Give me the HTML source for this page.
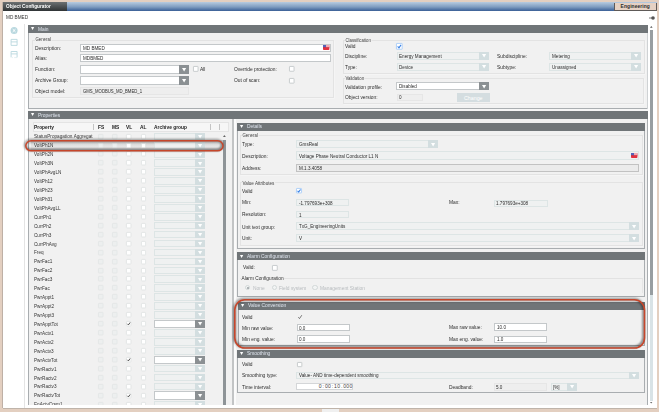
<!DOCTYPE html>
<html><head><meta charset="utf-8"><title>Object Configurator</title>
<style>
html,body{margin:0;padding:0}
body{width:659px;height:412px;position:relative;overflow:hidden;background:#e3cfc0;font-family:"Liberation Sans",sans-serif}
.a{position:absolute;box-sizing:border-box}
.t{font-size:5.3px;line-height:6px;white-space:nowrap;color:#2c2c2c}
svg.a{overflow:visible}
</style></head><body>
<div class="a " style="left:3px;top:2px;width:654px;height:406px;background:#fff;box-shadow:-0.5px 0 0 #9a928c, 0 0.6px 0 #a8a29c"></div>
<div class="a " style="left:3px;top:2px;width:64px;height:9px;background:linear-gradient(#6b7072,#2f3335)"></div>
<div class="a " style="left:67px;top:2px;width:590px;height:9px;background:linear-gradient(#b7cbe0,#7e9cc0 55%,#3a5f96)"></div>
<div class="a t" style="left:6.3px;top:4.1px;transform:scaleX(0.97);transform-origin:0 0;color:#fff;font-weight:bold;font-size:4.9px">Object Configurator</div>
<div class="a " style="left:614px;top:2.5px;width:42.5px;height:8.0px;background:#e5d1c3;border:1px solid #5e5a58;border-top:none"></div>
<div class="a t" style="left:620.6px;top:3.6px;color:#2a2a2a;font-weight:bold;font-size:4.9px;letter-spacing:0.1px">Engineering</div>
<div class="a t" style="left:5.8px;top:13.8px;transform:scaleX(0.9);transform-origin:0 0;font-size:5.2px;color:#333">MD BMED</div>
<svg class="a" style="left:648px;top:15px" width="8" height="6" viewBox="0 0 8 6"><circle cx="5" cy="3" r="1.8" fill="#555"/><rect x="1" y="2.6" width="3" height="0.8" fill="#555"/></svg>
<svg class="a" style="left:9px;top:25px" width="10" height="34" viewBox="0 0 10 34"><circle cx="5.1" cy="5.5" r="3.5" fill="#b9d8df"/><path d="M3.7 4.1 L6.5 6.9 M6.5 4.1 L3.7 6.9" stroke="#fff" stroke-width="1"/><path d="M2.1 14.4 H8.1 V20.4 H2.1 Z M2.1 16.9 H8.1" fill="none" stroke="#b9d8df" stroke-width="0.9"/><path d="M2.1 32.4 V26.5 H8.1 V32.4 M2.1 28.9 H8.1" fill="none" stroke="#b9d8df" stroke-width="0.9"/><path d="M3.2 32.6 H4 M5.2 32.6 H8" stroke="#d0e4e8" stroke-width="0.6"/></svg>
<div class="a " style="left:24px;top:24px;width:1px;height:384px;background:#e4e4e4"></div>
<div class="a " style="left:28px;top:25px;width:620px;height:83.6px;background:#f1f1f1;box-shadow:inset 1px 0 0 #a9adb0,inset -1px 0 0 #cfd2d4,inset 0 -1px 0 #a9adb0"></div>
<div class="a " style="left:28px;top:25px;width:620px;height:8px;background:#707578"></div>
<svg class="a" style="left:31.0px;top:27.4px" width="3.2" height="3" viewBox="0 0 3.2 3"><polygon points="0,0 3.2,0 1.6,3" fill="#fff"/></svg>
<div class="a t" style="left:37.5px;top:25.6px;transform:scaleX(0.92);transform-origin:0 0;color:#dfe5ee">Main</div>
<div class="a " style="left:32.3px;top:40px;width:302.0px;height:58.2px;border:1px solid #e3e3e3;box-shadow:0.5px 0.5px 0 #f9f9f9"></div>
<div class="a t" style="left:35.3px;top:37.2px;transform:scaleX(0.92);transform-origin:0 0;background:#f1f1f1;padding:0 0.5px;color:#3e3e3e;font-size:4.7px">General</div>
<div class="a t" style="left:34.5px;top:44.9px;transform:scaleX(0.93);transform-origin:0 0;">Description:</div>
<div class="a t" style="left:34.5px;top:55.2px;transform:scaleX(0.93);transform-origin:0 0;">Alias:</div>
<div class="a t" style="left:34.5px;top:66.3px;transform:scaleX(0.93);transform-origin:0 0;">Function:</div>
<div class="a t" style="left:34.5px;top:77.4px;transform:scaleX(0.93);transform-origin:0 0;">Archive Group:</div>
<div class="a t" style="left:34.5px;top:88.2px;transform:scaleX(0.93);transform-origin:0 0;">Object model:</div>
<div class="a " style="left:80px;top:44px;width:251px;height:8px;background:#fff;border:1px solid #c4c8ca"></div>
<div class="a t" style="left:82.5px;top:45.0px;transform:scaleX(0.92);transform-origin:0 0;font-size:5px;">MD BMED</div>
<svg class="a" style="left:322.5px;top:45.0px" width="6.4" height="5" viewBox="0 0 7 5.5" preserveAspectRatio="none"><rect width="7" height="5.5" rx="0.9" fill="#e3303f"/><rect x="3.1" y="0" width="3.9" height="2.6" fill="#f2a9b2"/><rect x="0" y="0" width="3.3" height="2.6" fill="#5563b8"/><rect x="0" y="2.6" width="7" height="0.5" fill="#c8283a"/></svg>
<div class="a " style="left:80px;top:54.2px;width:251px;height:8.1px;background:#fff;border:1px solid #c4c8ca"></div>
<div class="a t" style="left:82.5px;top:55.25px;transform:scaleX(0.92);transform-origin:0 0;font-size:5px;">MDBMED</div>
<div class="a " style="left:80px;top:65.1px;width:109px;height:8.7px;background:#fff;border:1px solid #c4c8ca"></div>
<div class="a " style="left:179px;top:65.1px;width:10px;height:8.7px;background:#8b9093"></div>
<svg class="a" style="left:181.9px;top:67.8px" width="4.2" height="3.5" viewBox="0 0 4.2 3.5"><polygon points="0,0 4.2,0 2.1,3.5" fill="#fff"/></svg>
<div class="a " style="left:80px;top:76.2px;width:109px;height:8.6px;background:#fff;border:1px solid #c4c8ca"></div>
<div class="a " style="left:179px;top:76.2px;width:10px;height:8.6px;background:#8b9093"></div>
<svg class="a" style="left:181.9px;top:78.85px" width="4.2" height="3.5" viewBox="0 0 4.2 3.5"><polygon points="0,0 4.2,0 2.1,3.5" fill="#fff"/></svg>
<div class="a " style="left:80px;top:87.3px;width:108.5px;height:7.7px;background:#eeeeee;border:1px solid #e6e6e6"></div>
<div class="a t" style="left:82.5px;top:88.15px;transform:scaleX(0.85);transform-origin:0 0;font-size:5px;">GMS_MODBUS_MD_BMED_1</div>
<svg class="a" style="left:193.2px;top:66.2px" width="5.5" height="5.8" viewBox="0 0 5.5 5.8"><rect x="0.45" y="0.45" width="4.6" height="4.9" rx="0.3" fill="#fff" stroke="#c4c8ca" stroke-width="0.9"/></svg>
<div class="a t" style="left:200px;top:66.1px;transform:scaleX(0.92);transform-origin:0 0;">All</div>
<div class="a t" style="left:234px;top:66.2px;transform:scaleX(0.92);transform-origin:0 0;">Override protection:</div>
<svg class="a" style="left:289.3px;top:66.3px" width="5.5" height="5.7" viewBox="0 0 5.5 5.7"><rect x="0.45" y="0.45" width="4.6" height="4.8" rx="0.3" fill="#fff" stroke="#c4c8ca" stroke-width="0.9"/></svg>
<div class="a t" style="left:234px;top:77.2px;transform:scaleX(0.92);transform-origin:0 0;">Out of scan:</div>
<svg class="a" style="left:289.3px;top:77.6px" width="5.5" height="5.6" viewBox="0 0 5.5 5.6"><rect x="0.45" y="0.45" width="4.6" height="4.7" rx="0.3" fill="#fff" stroke="#c4c8ca" stroke-width="0.9"/></svg>
<div class="a " style="left:342.5px;top:40px;width:302.0px;height:34px;border:1px solid #e3e3e3;box-shadow:0.5px 0.5px 0 #f9f9f9"></div>
<div class="a t" style="left:345.3px;top:38.1px;transform:scaleX(0.92);transform-origin:0 0;background:#f1f1f1;padding:0 0.5px;color:#3e3e3e;font-size:4.7px">Classification</div>
<div class="a t" style="left:344.5px;top:43.2px;transform:scaleX(0.92);transform-origin:0 0;">Valid</div>
<svg class="a" style="left:396.2px;top:43.2px" width="6.6" height="6.7" viewBox="0 0 6.6 6.7"><rect x="0.45" y="0.45" width="5.7" height="5.8" rx="0.3" fill="#fff" stroke="#a9cdf7" stroke-width="0.9"/><path d="M1.65 3.4840000000000004 L2.9699999999999998 4.824 L5.016 1.8760000000000003" fill="none" stroke="#3a82e6" stroke-width="1.1"/></svg>
<div class="a t" style="left:344.5px;top:53.2px;transform:scaleX(0.92);transform-origin:0 0;">Discipline:</div>
<div class="a " style="left:396.8px;top:52.1px;width:92.2px;height:7.9px;background:#eff1f1;border:1px solid #dde5e5"></div>
<div class="a " style="left:479px;top:52.1px;width:10px;height:7.9px;background:#d3dee0"></div>
<svg class="a" style="left:481.9px;top:54.4px" width="4.2" height="3.5" viewBox="0 0 4.2 3.5"><polygon points="0,0 4.2,0 2.1,3.5" fill="#fff"/></svg>
<div class="a t" style="left:399.3px;top:53.05px;transform:scaleX(0.92);transform-origin:0 0;font-size:5px;">Energy Management</div>
<div class="a t" style="left:344.5px;top:64.3px;transform:scaleX(0.92);transform-origin:0 0;">Type:</div>
<div class="a " style="left:396.8px;top:63.1px;width:92.2px;height:7.8px;background:#eff1f1;border:1px solid #dde5e5"></div>
<div class="a " style="left:479px;top:63.1px;width:10px;height:7.8px;background:#d3dee0"></div>
<svg class="a" style="left:481.9px;top:65.35px" width="4.2" height="3.5" viewBox="0 0 4.2 3.5"><polygon points="0,0 4.2,0 2.1,3.5" fill="#fff"/></svg>
<div class="a t" style="left:399.3px;top:64.0px;transform:scaleX(0.92);transform-origin:0 0;font-size:5px;">Device</div>
<div class="a t" style="left:496.5px;top:53.2px;transform:scaleX(0.92);transform-origin:0 0;">Subdiscipline:</div>
<div class="a " style="left:549.2px;top:52px;width:91.8px;height:7.9px;background:#eff1f1;border:1px solid #dde5e5"></div>
<div class="a " style="left:631px;top:52px;width:10px;height:7.9px;background:#d3dee0"></div>
<svg class="a" style="left:633.9px;top:54.3px" width="4.2" height="3.5" viewBox="0 0 4.2 3.5"><polygon points="0,0 4.2,0 2.1,3.5" fill="#fff"/></svg>
<div class="a t" style="left:551.7px;top:52.95px;transform:scaleX(0.92);transform-origin:0 0;font-size:5px;">Metering</div>
<div class="a t" style="left:496.5px;top:64.2px;transform:scaleX(0.92);transform-origin:0 0;">Subtype:</div>
<div class="a " style="left:549.2px;top:63px;width:91.8px;height:7.8px;background:#eff1f1;border:1px solid #dde5e5"></div>
<div class="a " style="left:631px;top:63px;width:10px;height:7.8px;background:#d3dee0"></div>
<svg class="a" style="left:633.9px;top:65.25px" width="4.2" height="3.5" viewBox="0 0 4.2 3.5"><polygon points="0,0 4.2,0 2.1,3.5" fill="#fff"/></svg>
<div class="a t" style="left:551.7px;top:63.9px;transform:scaleX(0.92);transform-origin:0 0;font-size:5px;">Unassigned</div>
<div class="a " style="left:342.7px;top:78.3px;width:301.8px;height:25.9px;border:1px solid #e3e3e3;box-shadow:0.5px 0.5px 0 #f9f9f9"></div>
<div class="a t" style="left:345.3px;top:76.4px;transform:scaleX(0.92);transform-origin:0 0;background:#f1f1f1;padding:0 0.5px;color:#3e3e3e;font-size:4.7px">Validation</div>
<div class="a t" style="left:344.5px;top:83.6px;transform:scaleX(0.92);transform-origin:0 0;">Validation profile:</div>
<div class="a " style="left:396px;top:82.2px;width:93px;height:8.3px;background:#fff;border:1px solid #c4c8ca"></div>
<div class="a " style="left:479px;top:82.2px;width:10px;height:8.3px;background:#8b9093"></div>
<svg class="a" style="left:481.9px;top:84.7px" width="4.2" height="3.5" viewBox="0 0 4.2 3.5"><polygon points="0,0 4.2,0 2.1,3.5" fill="#fff"/></svg>
<div class="a t" style="left:398.5px;top:83.35px;transform:scaleX(0.92);transform-origin:0 0;font-size:5px;">Disabled</div>
<div class="a t" style="left:344.5px;top:94.3px;transform:scaleX(0.92);transform-origin:0 0;">Object version:</div>
<div class="a " style="left:396.8px;top:93.5px;width:25.8px;height:7.9px;background:#eeeeee;border:1px solid #e6e6e6"></div>
<div class="a t" style="left:399.3px;top:94.45px;transform:scaleX(0.92);transform-origin:0 0;font-size:5px;">0</div>
<div class="a " style="left:456.5px;top:93.1px;width:33.5px;height:8.7px;background:#d4dde0"></div>
<div class="a t" style="left:456.5px;top:94.5px;width:33.5px;text-align:center;color:#fff">Change</div>
<div class="a " style="left:28px;top:108.6px;width:620px;height:2.4px;background:#f6f6f6"></div>
<div class="a " style="left:28px;top:111px;width:620px;height:293.6px;background:#f1f1f1;box-shadow:inset 1px 0 0 #a9adb0,inset -1px 0 0 #a9adb0"></div>
<div class="a " style="left:28px;top:111px;width:620px;height:8px;background:#707578"></div>
<svg class="a" style="left:31.0px;top:113.4px" width="3.2" height="3" viewBox="0 0 3.2 3"><polygon points="0,0 3.2,0 1.6,3" fill="#fff"/></svg>
<div class="a t" style="left:37.5px;top:111.6px;transform:scaleX(0.92);transform-origin:0 0;color:#dfe5ee">Properties</div>
<div class="a " style="left:32.8px;top:122.4px;width:195.8px;height:9.6px;background:#f6f6f6;border:1px solid #e4e4e4"></div>
<div class="a t" style="left:34.2px;top:124.1px;transform:scaleX(0.92);transform-origin:0 0;font-weight:bold;color:#222">Property</div>
<div class="a " style="left:93.4px;top:124.3px;width:0.8px;height:6.2px;background:#c4c4c4"></div>
<div class="a " style="left:210.4px;top:124.3px;width:0.8px;height:6.2px;background:#c4c4c4"></div>
<div class="a " style="left:219.2px;top:124.3px;width:0.8px;height:6.2px;background:#c4c4c4"></div>
<div class="a t" style="left:97.8px;top:124.1px;transform:scaleX(0.92);transform-origin:0 0;font-weight:bold;color:#222">FS</div>
<div class="a t" style="left:111.8px;top:124.1px;transform:scaleX(0.92);transform-origin:0 0;font-weight:bold;color:#222">MS</div>
<div class="a t" style="left:125.8px;top:124.1px;transform:scaleX(0.92);transform-origin:0 0;font-weight:bold;color:#222">VL</div>
<div class="a t" style="left:140px;top:124.1px;transform:scaleX(0.92);transform-origin:0 0;font-weight:bold;color:#222">AL</div>
<div class="a t" style="left:153.8px;top:124.1px;transform:scaleX(0.92);transform-origin:0 0;font-weight:bold;color:#222">Archive group</div>
<div class="a" style="left:28px;top:131.5px;width:200px;height:273.3px;overflow:hidden">
<div class="a t" style="left:6.2px;top:1.9px;transform:scaleX(0.88);transform-origin:0 0;color:#353535;width:67px;overflow:hidden">StatusPropagation.Aggregat</div>
<svg class="a" style="left:70.2px;top:2.100000000000006px" width="5.5" height="5.4" viewBox="0 0 5.5 5.4"><rect x="0.45" y="0.45" width="4.6" height="4.5" rx="0.3" fill="#edefef" stroke="#e3e6e6" stroke-width="0.9"/></svg>
<svg class="a" style="left:84.0px;top:2.100000000000006px" width="5.5" height="5.4" viewBox="0 0 5.5 5.4"><rect x="0.45" y="0.45" width="4.6" height="4.5" rx="0.3" fill="#edefef" stroke="#e3e6e6" stroke-width="0.9"/></svg>
<svg class="a" style="left:98.0px;top:2.100000000000006px" width="5.4" height="5.4" viewBox="0 0 5.4 5.4"><rect x="0.45" y="0.45" width="4.5" height="4.5" rx="0.3" fill="#fff" stroke="#e2e5e5" stroke-width="0.9"/></svg>
<svg class="a" style="left:112.5px;top:2.100000000000006px" width="5.0" height="5.4" viewBox="0 0 5.0 5.4"><rect x="0.45" y="0.45" width="4.1" height="4.5" rx="0.3" fill="#fff" stroke="#e2e5e5" stroke-width="0.9"/></svg>
<div class="a " style="left:126.4px;top:1.1000000000000059px;width:50.6px;height:7.6px;background:#eff1f1;border:1px solid #dde5e5"></div>
<div class="a " style="left:167px;top:1.1000000000000059px;width:10px;height:7.6px;background:#d3dee0"></div>
<svg class="a" style="left:169.9px;top:3.25px" width="4.2" height="3.5" viewBox="0 0 4.2 3.5"><polygon points="0,0 4.2,0 2.1,3.5" fill="#fff"/></svg>
<div class="a " style="left:3px;top:8.830000000000013px;width:192px;height:10.0px;background:linear-gradient(#c8c8c8,#dedede 40%,#e6e6e6 70%,#d8d8d8)"></div>
<div class="a t" style="left:6.2px;top:10.83px;transform:scaleX(0.88);transform-origin:0 0;color:#353535;width:67px;overflow:hidden">VoltPh1N</div>
<svg class="a" style="left:70.2px;top:11.030000000000012px" width="5.5" height="5.4" viewBox="0 0 5.5 5.4"><rect x="0.45" y="0.45" width="4.6" height="4.5" rx="0.3" fill="#edefef" stroke="#e3e6e6" stroke-width="0.9"/></svg>
<svg class="a" style="left:84.0px;top:11.030000000000012px" width="5.5" height="5.4" viewBox="0 0 5.5 5.4"><rect x="0.45" y="0.45" width="4.6" height="4.5" rx="0.3" fill="#edefef" stroke="#e3e6e6" stroke-width="0.9"/></svg>
<svg class="a" style="left:98.0px;top:11.030000000000012px" width="5.4" height="5.4" viewBox="0 0 5.4 5.4"><rect x="0.45" y="0.45" width="4.5" height="4.5" rx="0.3" fill="#fff" stroke="#e2e5e5" stroke-width="0.9"/></svg>
<svg class="a" style="left:112.5px;top:11.030000000000012px" width="5.0" height="5.4" viewBox="0 0 5.0 5.4"><rect x="0.45" y="0.45" width="4.1" height="4.5" rx="0.3" fill="#fff" stroke="#e2e5e5" stroke-width="0.9"/></svg>
<div class="a " style="left:126.4px;top:10.030000000000012px;width:50.6px;height:7.6px;background:#eff1f1;border:1px solid #dde5e5"></div>
<div class="a " style="left:167px;top:10.030000000000012px;width:10px;height:7.6px;background:#d3dee0"></div>
<svg class="a" style="left:169.9px;top:12.18px" width="4.2" height="3.5" viewBox="0 0 4.2 3.5"><polygon points="0,0 4.2,0 2.1,3.5" fill="#fff"/></svg>
<div class="a t" style="left:6.2px;top:19.76px;transform:scaleX(0.88);transform-origin:0 0;color:#353535;width:67px;overflow:hidden">VoltPh2N</div>
<svg class="a" style="left:70.2px;top:19.95999999999999px" width="5.5" height="5.4" viewBox="0 0 5.5 5.4"><rect x="0.45" y="0.45" width="4.6" height="4.5" rx="0.3" fill="#edefef" stroke="#e3e6e6" stroke-width="0.9"/></svg>
<svg class="a" style="left:84.0px;top:19.95999999999999px" width="5.5" height="5.4" viewBox="0 0 5.5 5.4"><rect x="0.45" y="0.45" width="4.6" height="4.5" rx="0.3" fill="#edefef" stroke="#e3e6e6" stroke-width="0.9"/></svg>
<svg class="a" style="left:98.0px;top:19.95999999999999px" width="5.4" height="5.4" viewBox="0 0 5.4 5.4"><rect x="0.45" y="0.45" width="4.5" height="4.5" rx="0.3" fill="#fff" stroke="#e2e5e5" stroke-width="0.9"/></svg>
<svg class="a" style="left:112.5px;top:19.95999999999999px" width="5.0" height="5.4" viewBox="0 0 5.0 5.4"><rect x="0.45" y="0.45" width="4.1" height="4.5" rx="0.3" fill="#fff" stroke="#e2e5e5" stroke-width="0.9"/></svg>
<div class="a " style="left:126.4px;top:18.95999999999999px;width:50.6px;height:7.6px;background:#eff1f1;border:1px solid #dde5e5"></div>
<div class="a " style="left:167px;top:18.95999999999999px;width:10px;height:7.6px;background:#d3dee0"></div>
<svg class="a" style="left:169.9px;top:21.11px" width="4.2" height="3.5" viewBox="0 0 4.2 3.5"><polygon points="0,0 4.2,0 2.1,3.5" fill="#fff"/></svg>
<div class="a t" style="left:6.2px;top:28.69px;transform:scaleX(0.88);transform-origin:0 0;color:#353535;width:67px;overflow:hidden">VoltPh3N</div>
<svg class="a" style="left:70.2px;top:28.889999999999997px" width="5.5" height="5.4" viewBox="0 0 5.5 5.4"><rect x="0.45" y="0.45" width="4.6" height="4.5" rx="0.3" fill="#edefef" stroke="#e3e6e6" stroke-width="0.9"/></svg>
<svg class="a" style="left:84.0px;top:28.889999999999997px" width="5.5" height="5.4" viewBox="0 0 5.5 5.4"><rect x="0.45" y="0.45" width="4.6" height="4.5" rx="0.3" fill="#edefef" stroke="#e3e6e6" stroke-width="0.9"/></svg>
<svg class="a" style="left:98.0px;top:28.889999999999997px" width="5.4" height="5.4" viewBox="0 0 5.4 5.4"><rect x="0.45" y="0.45" width="4.5" height="4.5" rx="0.3" fill="#fff" stroke="#e2e5e5" stroke-width="0.9"/></svg>
<svg class="a" style="left:112.5px;top:28.889999999999997px" width="5.0" height="5.4" viewBox="0 0 5.0 5.4"><rect x="0.45" y="0.45" width="4.1" height="4.5" rx="0.3" fill="#fff" stroke="#e2e5e5" stroke-width="0.9"/></svg>
<div class="a " style="left:126.4px;top:27.889999999999997px;width:50.6px;height:7.6px;background:#eff1f1;border:1px solid #dde5e5"></div>
<div class="a " style="left:167px;top:27.889999999999997px;width:10px;height:7.6px;background:#d3dee0"></div>
<svg class="a" style="left:169.9px;top:30.04px" width="4.2" height="3.5" viewBox="0 0 4.2 3.5"><polygon points="0,0 4.2,0 2.1,3.5" fill="#fff"/></svg>
<div class="a t" style="left:6.2px;top:37.62px;transform:scaleX(0.88);transform-origin:0 0;color:#353535;width:67px;overflow:hidden">VoltPhAvgLN</div>
<svg class="a" style="left:70.2px;top:37.82000000000001px" width="5.5" height="5.4" viewBox="0 0 5.5 5.4"><rect x="0.45" y="0.45" width="4.6" height="4.5" rx="0.3" fill="#edefef" stroke="#e3e6e6" stroke-width="0.9"/></svg>
<svg class="a" style="left:84.0px;top:37.82000000000001px" width="5.5" height="5.4" viewBox="0 0 5.5 5.4"><rect x="0.45" y="0.45" width="4.6" height="4.5" rx="0.3" fill="#edefef" stroke="#e3e6e6" stroke-width="0.9"/></svg>
<svg class="a" style="left:98.0px;top:37.82000000000001px" width="5.4" height="5.4" viewBox="0 0 5.4 5.4"><rect x="0.45" y="0.45" width="4.5" height="4.5" rx="0.3" fill="#fff" stroke="#e2e5e5" stroke-width="0.9"/></svg>
<svg class="a" style="left:112.5px;top:37.82000000000001px" width="5.0" height="5.4" viewBox="0 0 5.0 5.4"><rect x="0.45" y="0.45" width="4.1" height="4.5" rx="0.3" fill="#fff" stroke="#e2e5e5" stroke-width="0.9"/></svg>
<div class="a " style="left:126.4px;top:36.82000000000001px;width:50.6px;height:7.6px;background:#eff1f1;border:1px solid #dde5e5"></div>
<div class="a " style="left:167px;top:36.82000000000001px;width:10px;height:7.6px;background:#d3dee0"></div>
<svg class="a" style="left:169.9px;top:38.97px" width="4.2" height="3.5" viewBox="0 0 4.2 3.5"><polygon points="0,0 4.2,0 2.1,3.5" fill="#fff"/></svg>
<div class="a t" style="left:6.2px;top:46.55px;transform:scaleX(0.88);transform-origin:0 0;color:#353535;width:67px;overflow:hidden">VoltPh12</div>
<svg class="a" style="left:70.2px;top:46.750000000000014px" width="5.5" height="5.4" viewBox="0 0 5.5 5.4"><rect x="0.45" y="0.45" width="4.6" height="4.5" rx="0.3" fill="#edefef" stroke="#e3e6e6" stroke-width="0.9"/></svg>
<svg class="a" style="left:84.0px;top:46.750000000000014px" width="5.5" height="5.4" viewBox="0 0 5.5 5.4"><rect x="0.45" y="0.45" width="4.6" height="4.5" rx="0.3" fill="#edefef" stroke="#e3e6e6" stroke-width="0.9"/></svg>
<svg class="a" style="left:98.0px;top:46.750000000000014px" width="5.4" height="5.4" viewBox="0 0 5.4 5.4"><rect x="0.45" y="0.45" width="4.5" height="4.5" rx="0.3" fill="#fff" stroke="#e2e5e5" stroke-width="0.9"/></svg>
<svg class="a" style="left:112.5px;top:46.750000000000014px" width="5.0" height="5.4" viewBox="0 0 5.0 5.4"><rect x="0.45" y="0.45" width="4.1" height="4.5" rx="0.3" fill="#fff" stroke="#e2e5e5" stroke-width="0.9"/></svg>
<div class="a " style="left:126.4px;top:45.750000000000014px;width:50.6px;height:7.6px;background:#eff1f1;border:1px solid #dde5e5"></div>
<div class="a " style="left:167px;top:45.750000000000014px;width:10px;height:7.6px;background:#d3dee0"></div>
<svg class="a" style="left:169.9px;top:47.9px" width="4.2" height="3.5" viewBox="0 0 4.2 3.5"><polygon points="0,0 4.2,0 2.1,3.5" fill="#fff"/></svg>
<div class="a t" style="left:6.2px;top:55.48px;transform:scaleX(0.88);transform-origin:0 0;color:#353535;width:67px;overflow:hidden">VoltPh23</div>
<svg class="a" style="left:70.2px;top:55.68000000000002px" width="5.5" height="5.4" viewBox="0 0 5.5 5.4"><rect x="0.45" y="0.45" width="4.6" height="4.5" rx="0.3" fill="#edefef" stroke="#e3e6e6" stroke-width="0.9"/></svg>
<svg class="a" style="left:84.0px;top:55.68000000000002px" width="5.5" height="5.4" viewBox="0 0 5.5 5.4"><rect x="0.45" y="0.45" width="4.6" height="4.5" rx="0.3" fill="#edefef" stroke="#e3e6e6" stroke-width="0.9"/></svg>
<svg class="a" style="left:98.0px;top:55.68000000000002px" width="5.4" height="5.4" viewBox="0 0 5.4 5.4"><rect x="0.45" y="0.45" width="4.5" height="4.5" rx="0.3" fill="#fff" stroke="#e2e5e5" stroke-width="0.9"/></svg>
<svg class="a" style="left:112.5px;top:55.68000000000002px" width="5.0" height="5.4" viewBox="0 0 5.0 5.4"><rect x="0.45" y="0.45" width="4.1" height="4.5" rx="0.3" fill="#fff" stroke="#e2e5e5" stroke-width="0.9"/></svg>
<div class="a " style="left:126.4px;top:54.68000000000002px;width:50.6px;height:7.6px;background:#eff1f1;border:1px solid #dde5e5"></div>
<div class="a " style="left:167px;top:54.68000000000002px;width:10px;height:7.6px;background:#d3dee0"></div>
<svg class="a" style="left:169.9px;top:56.83px" width="4.2" height="3.5" viewBox="0 0 4.2 3.5"><polygon points="0,0 4.2,0 2.1,3.5" fill="#fff"/></svg>
<div class="a t" style="left:6.2px;top:64.41px;transform:scaleX(0.88);transform-origin:0 0;color:#353535;width:67px;overflow:hidden">VoltPh31</div>
<svg class="a" style="left:70.2px;top:64.61px" width="5.5" height="5.4" viewBox="0 0 5.5 5.4"><rect x="0.45" y="0.45" width="4.6" height="4.5" rx="0.3" fill="#edefef" stroke="#e3e6e6" stroke-width="0.9"/></svg>
<svg class="a" style="left:84.0px;top:64.61px" width="5.5" height="5.4" viewBox="0 0 5.5 5.4"><rect x="0.45" y="0.45" width="4.6" height="4.5" rx="0.3" fill="#edefef" stroke="#e3e6e6" stroke-width="0.9"/></svg>
<svg class="a" style="left:98.0px;top:64.61px" width="5.4" height="5.4" viewBox="0 0 5.4 5.4"><rect x="0.45" y="0.45" width="4.5" height="4.5" rx="0.3" fill="#fff" stroke="#e2e5e5" stroke-width="0.9"/></svg>
<svg class="a" style="left:112.5px;top:64.61px" width="5.0" height="5.4" viewBox="0 0 5.0 5.4"><rect x="0.45" y="0.45" width="4.1" height="4.5" rx="0.3" fill="#fff" stroke="#e2e5e5" stroke-width="0.9"/></svg>
<div class="a " style="left:126.4px;top:63.61px;width:50.6px;height:7.6px;background:#eff1f1;border:1px solid #dde5e5"></div>
<div class="a " style="left:167px;top:63.61px;width:10px;height:7.6px;background:#d3dee0"></div>
<svg class="a" style="left:169.9px;top:65.76px" width="4.2" height="3.5" viewBox="0 0 4.2 3.5"><polygon points="0,0 4.2,0 2.1,3.5" fill="#fff"/></svg>
<div class="a t" style="left:6.2px;top:73.34px;transform:scaleX(0.88);transform-origin:0 0;color:#353535;width:67px;overflow:hidden">VoltPhAvgLL</div>
<svg class="a" style="left:70.2px;top:73.54px" width="5.5" height="5.4" viewBox="0 0 5.5 5.4"><rect x="0.45" y="0.45" width="4.6" height="4.5" rx="0.3" fill="#edefef" stroke="#e3e6e6" stroke-width="0.9"/></svg>
<svg class="a" style="left:84.0px;top:73.54px" width="5.5" height="5.4" viewBox="0 0 5.5 5.4"><rect x="0.45" y="0.45" width="4.6" height="4.5" rx="0.3" fill="#edefef" stroke="#e3e6e6" stroke-width="0.9"/></svg>
<svg class="a" style="left:98.0px;top:73.54px" width="5.4" height="5.4" viewBox="0 0 5.4 5.4"><rect x="0.45" y="0.45" width="4.5" height="4.5" rx="0.3" fill="#fff" stroke="#e2e5e5" stroke-width="0.9"/></svg>
<svg class="a" style="left:112.5px;top:73.54px" width="5.0" height="5.4" viewBox="0 0 5.0 5.4"><rect x="0.45" y="0.45" width="4.1" height="4.5" rx="0.3" fill="#fff" stroke="#e2e5e5" stroke-width="0.9"/></svg>
<div class="a " style="left:126.4px;top:72.54px;width:50.6px;height:7.6px;background:#eff1f1;border:1px solid #dde5e5"></div>
<div class="a " style="left:167px;top:72.54px;width:10px;height:7.6px;background:#d3dee0"></div>
<svg class="a" style="left:169.9px;top:74.69px" width="4.2" height="3.5" viewBox="0 0 4.2 3.5"><polygon points="0,0 4.2,0 2.1,3.5" fill="#fff"/></svg>
<div class="a t" style="left:6.2px;top:82.27px;transform:scaleX(0.88);transform-origin:0 0;color:#353535;width:67px;overflow:hidden">CurrPh1</div>
<svg class="a" style="left:70.2px;top:82.47000000000001px" width="5.5" height="5.4" viewBox="0 0 5.5 5.4"><rect x="0.45" y="0.45" width="4.6" height="4.5" rx="0.3" fill="#edefef" stroke="#e3e6e6" stroke-width="0.9"/></svg>
<svg class="a" style="left:84.0px;top:82.47000000000001px" width="5.5" height="5.4" viewBox="0 0 5.5 5.4"><rect x="0.45" y="0.45" width="4.6" height="4.5" rx="0.3" fill="#edefef" stroke="#e3e6e6" stroke-width="0.9"/></svg>
<svg class="a" style="left:98.0px;top:82.47000000000001px" width="5.4" height="5.4" viewBox="0 0 5.4 5.4"><rect x="0.45" y="0.45" width="4.5" height="4.5" rx="0.3" fill="#fff" stroke="#e2e5e5" stroke-width="0.9"/></svg>
<svg class="a" style="left:112.5px;top:82.47000000000001px" width="5.0" height="5.4" viewBox="0 0 5.0 5.4"><rect x="0.45" y="0.45" width="4.1" height="4.5" rx="0.3" fill="#fff" stroke="#e2e5e5" stroke-width="0.9"/></svg>
<div class="a " style="left:126.4px;top:81.47000000000001px;width:50.6px;height:7.6px;background:#eff1f1;border:1px solid #dde5e5"></div>
<div class="a " style="left:167px;top:81.47000000000001px;width:10px;height:7.6px;background:#d3dee0"></div>
<svg class="a" style="left:169.9px;top:83.62px" width="4.2" height="3.5" viewBox="0 0 4.2 3.5"><polygon points="0,0 4.2,0 2.1,3.5" fill="#fff"/></svg>
<div class="a t" style="left:6.2px;top:91.2px;transform:scaleX(0.88);transform-origin:0 0;color:#353535;width:67px;overflow:hidden">CurrPh2</div>
<svg class="a" style="left:70.2px;top:91.39999999999999px" width="5.5" height="5.4" viewBox="0 0 5.5 5.4"><rect x="0.45" y="0.45" width="4.6" height="4.5" rx="0.3" fill="#edefef" stroke="#e3e6e6" stroke-width="0.9"/></svg>
<svg class="a" style="left:84.0px;top:91.39999999999999px" width="5.5" height="5.4" viewBox="0 0 5.5 5.4"><rect x="0.45" y="0.45" width="4.6" height="4.5" rx="0.3" fill="#edefef" stroke="#e3e6e6" stroke-width="0.9"/></svg>
<svg class="a" style="left:98.0px;top:91.39999999999999px" width="5.4" height="5.4" viewBox="0 0 5.4 5.4"><rect x="0.45" y="0.45" width="4.5" height="4.5" rx="0.3" fill="#fff" stroke="#e2e5e5" stroke-width="0.9"/></svg>
<svg class="a" style="left:112.5px;top:91.39999999999999px" width="5.0" height="5.4" viewBox="0 0 5.0 5.4"><rect x="0.45" y="0.45" width="4.1" height="4.5" rx="0.3" fill="#fff" stroke="#e2e5e5" stroke-width="0.9"/></svg>
<div class="a " style="left:126.4px;top:90.39999999999999px;width:50.6px;height:7.6px;background:#eff1f1;border:1px solid #dde5e5"></div>
<div class="a " style="left:167px;top:90.39999999999999px;width:10px;height:7.6px;background:#d3dee0"></div>
<svg class="a" style="left:169.9px;top:92.55px" width="4.2" height="3.5" viewBox="0 0 4.2 3.5"><polygon points="0,0 4.2,0 2.1,3.5" fill="#fff"/></svg>
<div class="a t" style="left:6.2px;top:100.13px;transform:scaleX(0.88);transform-origin:0 0;color:#353535;width:67px;overflow:hidden">CurrPh3</div>
<svg class="a" style="left:70.2px;top:100.33px" width="5.5" height="5.4" viewBox="0 0 5.5 5.4"><rect x="0.45" y="0.45" width="4.6" height="4.5" rx="0.3" fill="#edefef" stroke="#e3e6e6" stroke-width="0.9"/></svg>
<svg class="a" style="left:84.0px;top:100.33px" width="5.5" height="5.4" viewBox="0 0 5.5 5.4"><rect x="0.45" y="0.45" width="4.6" height="4.5" rx="0.3" fill="#edefef" stroke="#e3e6e6" stroke-width="0.9"/></svg>
<svg class="a" style="left:98.0px;top:100.33px" width="5.4" height="5.4" viewBox="0 0 5.4 5.4"><rect x="0.45" y="0.45" width="4.5" height="4.5" rx="0.3" fill="#fff" stroke="#e2e5e5" stroke-width="0.9"/></svg>
<svg class="a" style="left:112.5px;top:100.33px" width="5.0" height="5.4" viewBox="0 0 5.0 5.4"><rect x="0.45" y="0.45" width="4.1" height="4.5" rx="0.3" fill="#fff" stroke="#e2e5e5" stroke-width="0.9"/></svg>
<div class="a " style="left:126.4px;top:99.33px;width:50.6px;height:7.6px;background:#eff1f1;border:1px solid #dde5e5"></div>
<div class="a " style="left:167px;top:99.33px;width:10px;height:7.6px;background:#d3dee0"></div>
<svg class="a" style="left:169.9px;top:101.48px" width="4.2" height="3.5" viewBox="0 0 4.2 3.5"><polygon points="0,0 4.2,0 2.1,3.5" fill="#fff"/></svg>
<div class="a t" style="left:6.2px;top:109.06px;transform:scaleX(0.88);transform-origin:0 0;color:#353535;width:67px;overflow:hidden">CurrPhAvg</div>
<svg class="a" style="left:70.2px;top:109.26px" width="5.5" height="5.4" viewBox="0 0 5.5 5.4"><rect x="0.45" y="0.45" width="4.6" height="4.5" rx="0.3" fill="#edefef" stroke="#e3e6e6" stroke-width="0.9"/></svg>
<svg class="a" style="left:84.0px;top:109.26px" width="5.5" height="5.4" viewBox="0 0 5.5 5.4"><rect x="0.45" y="0.45" width="4.6" height="4.5" rx="0.3" fill="#edefef" stroke="#e3e6e6" stroke-width="0.9"/></svg>
<svg class="a" style="left:98.0px;top:109.26px" width="5.4" height="5.4" viewBox="0 0 5.4 5.4"><rect x="0.45" y="0.45" width="4.5" height="4.5" rx="0.3" fill="#fff" stroke="#e2e5e5" stroke-width="0.9"/></svg>
<svg class="a" style="left:112.5px;top:109.26px" width="5.0" height="5.4" viewBox="0 0 5.0 5.4"><rect x="0.45" y="0.45" width="4.1" height="4.5" rx="0.3" fill="#fff" stroke="#e2e5e5" stroke-width="0.9"/></svg>
<div class="a " style="left:126.4px;top:108.26px;width:50.6px;height:7.6px;background:#eff1f1;border:1px solid #dde5e5"></div>
<div class="a " style="left:167px;top:108.26px;width:10px;height:7.6px;background:#d3dee0"></div>
<svg class="a" style="left:169.9px;top:110.41px" width="4.2" height="3.5" viewBox="0 0 4.2 3.5"><polygon points="0,0 4.2,0 2.1,3.5" fill="#fff"/></svg>
<div class="a t" style="left:6.2px;top:117.99px;transform:scaleX(0.88);transform-origin:0 0;color:#353535;width:67px;overflow:hidden">Freq</div>
<svg class="a" style="left:70.2px;top:118.19000000000001px" width="5.5" height="5.4" viewBox="0 0 5.5 5.4"><rect x="0.45" y="0.45" width="4.6" height="4.5" rx="0.3" fill="#edefef" stroke="#e3e6e6" stroke-width="0.9"/></svg>
<svg class="a" style="left:84.0px;top:118.19000000000001px" width="5.5" height="5.4" viewBox="0 0 5.5 5.4"><rect x="0.45" y="0.45" width="4.6" height="4.5" rx="0.3" fill="#edefef" stroke="#e3e6e6" stroke-width="0.9"/></svg>
<svg class="a" style="left:98.0px;top:118.19000000000001px" width="5.4" height="5.4" viewBox="0 0 5.4 5.4"><rect x="0.45" y="0.45" width="4.5" height="4.5" rx="0.3" fill="#fff" stroke="#e2e5e5" stroke-width="0.9"/></svg>
<svg class="a" style="left:112.5px;top:118.19000000000001px" width="5.0" height="5.4" viewBox="0 0 5.0 5.4"><rect x="0.45" y="0.45" width="4.1" height="4.5" rx="0.3" fill="#fff" stroke="#e2e5e5" stroke-width="0.9"/></svg>
<div class="a " style="left:126.4px;top:117.19000000000001px;width:50.6px;height:7.6px;background:#eff1f1;border:1px solid #dde5e5"></div>
<div class="a " style="left:167px;top:117.19000000000001px;width:10px;height:7.6px;background:#d3dee0"></div>
<svg class="a" style="left:169.9px;top:119.34px" width="4.2" height="3.5" viewBox="0 0 4.2 3.5"><polygon points="0,0 4.2,0 2.1,3.5" fill="#fff"/></svg>
<div class="a t" style="left:6.2px;top:126.92px;transform:scaleX(0.88);transform-origin:0 0;color:#353535;width:67px;overflow:hidden">PwrFac1</div>
<svg class="a" style="left:70.2px;top:127.12000000000002px" width="5.5" height="5.4" viewBox="0 0 5.5 5.4"><rect x="0.45" y="0.45" width="4.6" height="4.5" rx="0.3" fill="#edefef" stroke="#e3e6e6" stroke-width="0.9"/></svg>
<svg class="a" style="left:84.0px;top:127.12000000000002px" width="5.5" height="5.4" viewBox="0 0 5.5 5.4"><rect x="0.45" y="0.45" width="4.6" height="4.5" rx="0.3" fill="#edefef" stroke="#e3e6e6" stroke-width="0.9"/></svg>
<svg class="a" style="left:98.0px;top:127.12000000000002px" width="5.4" height="5.4" viewBox="0 0 5.4 5.4"><rect x="0.45" y="0.45" width="4.5" height="4.5" rx="0.3" fill="#fff" stroke="#e2e5e5" stroke-width="0.9"/></svg>
<svg class="a" style="left:112.5px;top:127.12000000000002px" width="5.0" height="5.4" viewBox="0 0 5.0 5.4"><rect x="0.45" y="0.45" width="4.1" height="4.5" rx="0.3" fill="#fff" stroke="#e2e5e5" stroke-width="0.9"/></svg>
<div class="a " style="left:126.4px;top:126.12000000000002px;width:50.6px;height:7.6px;background:#eff1f1;border:1px solid #dde5e5"></div>
<div class="a " style="left:167px;top:126.12000000000002px;width:10px;height:7.6px;background:#d3dee0"></div>
<svg class="a" style="left:169.9px;top:128.27px" width="4.2" height="3.5" viewBox="0 0 4.2 3.5"><polygon points="0,0 4.2,0 2.1,3.5" fill="#fff"/></svg>
<div class="a t" style="left:6.2px;top:135.85px;transform:scaleX(0.88);transform-origin:0 0;color:#353535;width:67px;overflow:hidden">PwrFac2</div>
<svg class="a" style="left:70.2px;top:136.05px" width="5.5" height="5.4" viewBox="0 0 5.5 5.4"><rect x="0.45" y="0.45" width="4.6" height="4.5" rx="0.3" fill="#edefef" stroke="#e3e6e6" stroke-width="0.9"/></svg>
<svg class="a" style="left:84.0px;top:136.05px" width="5.5" height="5.4" viewBox="0 0 5.5 5.4"><rect x="0.45" y="0.45" width="4.6" height="4.5" rx="0.3" fill="#edefef" stroke="#e3e6e6" stroke-width="0.9"/></svg>
<svg class="a" style="left:98.0px;top:136.05px" width="5.4" height="5.4" viewBox="0 0 5.4 5.4"><rect x="0.45" y="0.45" width="4.5" height="4.5" rx="0.3" fill="#fff" stroke="#e2e5e5" stroke-width="0.9"/></svg>
<svg class="a" style="left:112.5px;top:136.05px" width="5.0" height="5.4" viewBox="0 0 5.0 5.4"><rect x="0.45" y="0.45" width="4.1" height="4.5" rx="0.3" fill="#fff" stroke="#e2e5e5" stroke-width="0.9"/></svg>
<div class="a " style="left:126.4px;top:135.05px;width:50.6px;height:7.6px;background:#eff1f1;border:1px solid #dde5e5"></div>
<div class="a " style="left:167px;top:135.05px;width:10px;height:7.6px;background:#d3dee0"></div>
<svg class="a" style="left:169.9px;top:137.2px" width="4.2" height="3.5" viewBox="0 0 4.2 3.5"><polygon points="0,0 4.2,0 2.1,3.5" fill="#fff"/></svg>
<div class="a t" style="left:6.2px;top:144.78px;transform:scaleX(0.88);transform-origin:0 0;color:#353535;width:67px;overflow:hidden">PwrFac3</div>
<svg class="a" style="left:70.2px;top:144.97999999999996px" width="5.5" height="5.4" viewBox="0 0 5.5 5.4"><rect x="0.45" y="0.45" width="4.6" height="4.5" rx="0.3" fill="#edefef" stroke="#e3e6e6" stroke-width="0.9"/></svg>
<svg class="a" style="left:84.0px;top:144.97999999999996px" width="5.5" height="5.4" viewBox="0 0 5.5 5.4"><rect x="0.45" y="0.45" width="4.6" height="4.5" rx="0.3" fill="#edefef" stroke="#e3e6e6" stroke-width="0.9"/></svg>
<svg class="a" style="left:98.0px;top:144.97999999999996px" width="5.4" height="5.4" viewBox="0 0 5.4 5.4"><rect x="0.45" y="0.45" width="4.5" height="4.5" rx="0.3" fill="#fff" stroke="#e2e5e5" stroke-width="0.9"/></svg>
<svg class="a" style="left:112.5px;top:144.97999999999996px" width="5.0" height="5.4" viewBox="0 0 5.0 5.4"><rect x="0.45" y="0.45" width="4.1" height="4.5" rx="0.3" fill="#fff" stroke="#e2e5e5" stroke-width="0.9"/></svg>
<div class="a " style="left:126.4px;top:143.97999999999996px;width:50.6px;height:7.6px;background:#eff1f1;border:1px solid #dde5e5"></div>
<div class="a " style="left:167px;top:143.97999999999996px;width:10px;height:7.6px;background:#d3dee0"></div>
<svg class="a" style="left:169.9px;top:146.13px" width="4.2" height="3.5" viewBox="0 0 4.2 3.5"><polygon points="0,0 4.2,0 2.1,3.5" fill="#fff"/></svg>
<div class="a t" style="left:6.2px;top:153.71px;transform:scaleX(0.88);transform-origin:0 0;color:#353535;width:67px;overflow:hidden">PwrFac</div>
<svg class="a" style="left:70.2px;top:153.91000000000003px" width="5.5" height="5.4" viewBox="0 0 5.5 5.4"><rect x="0.45" y="0.45" width="4.6" height="4.5" rx="0.3" fill="#edefef" stroke="#e3e6e6" stroke-width="0.9"/></svg>
<svg class="a" style="left:84.0px;top:153.91000000000003px" width="5.5" height="5.4" viewBox="0 0 5.5 5.4"><rect x="0.45" y="0.45" width="4.6" height="4.5" rx="0.3" fill="#edefef" stroke="#e3e6e6" stroke-width="0.9"/></svg>
<svg class="a" style="left:98.0px;top:153.91000000000003px" width="5.4" height="5.4" viewBox="0 0 5.4 5.4"><rect x="0.45" y="0.45" width="4.5" height="4.5" rx="0.3" fill="#fff" stroke="#e2e5e5" stroke-width="0.9"/></svg>
<svg class="a" style="left:112.5px;top:153.91000000000003px" width="5.0" height="5.4" viewBox="0 0 5.0 5.4"><rect x="0.45" y="0.45" width="4.1" height="4.5" rx="0.3" fill="#fff" stroke="#e2e5e5" stroke-width="0.9"/></svg>
<div class="a " style="left:126.4px;top:152.91000000000003px;width:50.6px;height:7.6px;background:#eff1f1;border:1px solid #dde5e5"></div>
<div class="a " style="left:167px;top:152.91000000000003px;width:10px;height:7.6px;background:#d3dee0"></div>
<svg class="a" style="left:169.9px;top:155.06px" width="4.2" height="3.5" viewBox="0 0 4.2 3.5"><polygon points="0,0 4.2,0 2.1,3.5" fill="#fff"/></svg>
<div class="a t" style="left:6.2px;top:162.64px;transform:scaleX(0.88);transform-origin:0 0;color:#353535;width:67px;overflow:hidden">PwrAppt1</div>
<svg class="a" style="left:70.2px;top:162.83999999999997px" width="5.5" height="5.4" viewBox="0 0 5.5 5.4"><rect x="0.45" y="0.45" width="4.6" height="4.5" rx="0.3" fill="#edefef" stroke="#e3e6e6" stroke-width="0.9"/></svg>
<svg class="a" style="left:84.0px;top:162.83999999999997px" width="5.5" height="5.4" viewBox="0 0 5.5 5.4"><rect x="0.45" y="0.45" width="4.6" height="4.5" rx="0.3" fill="#edefef" stroke="#e3e6e6" stroke-width="0.9"/></svg>
<svg class="a" style="left:98.0px;top:162.83999999999997px" width="5.4" height="5.4" viewBox="0 0 5.4 5.4"><rect x="0.45" y="0.45" width="4.5" height="4.5" rx="0.3" fill="#fff" stroke="#e2e5e5" stroke-width="0.9"/></svg>
<svg class="a" style="left:112.5px;top:162.83999999999997px" width="5.0" height="5.4" viewBox="0 0 5.0 5.4"><rect x="0.45" y="0.45" width="4.1" height="4.5" rx="0.3" fill="#fff" stroke="#e2e5e5" stroke-width="0.9"/></svg>
<div class="a " style="left:126.4px;top:161.83999999999997px;width:50.6px;height:7.6px;background:#eff1f1;border:1px solid #dde5e5"></div>
<div class="a " style="left:167px;top:161.83999999999997px;width:10px;height:7.6px;background:#d3dee0"></div>
<svg class="a" style="left:169.9px;top:163.99px" width="4.2" height="3.5" viewBox="0 0 4.2 3.5"><polygon points="0,0 4.2,0 2.1,3.5" fill="#fff"/></svg>
<div class="a t" style="left:6.2px;top:171.57px;transform:scaleX(0.88);transform-origin:0 0;color:#353535;width:67px;overflow:hidden">PwrAppt2</div>
<svg class="a" style="left:70.2px;top:171.76999999999998px" width="5.5" height="5.4" viewBox="0 0 5.5 5.4"><rect x="0.45" y="0.45" width="4.6" height="4.5" rx="0.3" fill="#edefef" stroke="#e3e6e6" stroke-width="0.9"/></svg>
<svg class="a" style="left:84.0px;top:171.76999999999998px" width="5.5" height="5.4" viewBox="0 0 5.5 5.4"><rect x="0.45" y="0.45" width="4.6" height="4.5" rx="0.3" fill="#edefef" stroke="#e3e6e6" stroke-width="0.9"/></svg>
<svg class="a" style="left:98.0px;top:171.76999999999998px" width="5.4" height="5.4" viewBox="0 0 5.4 5.4"><rect x="0.45" y="0.45" width="4.5" height="4.5" rx="0.3" fill="#fff" stroke="#e2e5e5" stroke-width="0.9"/></svg>
<svg class="a" style="left:112.5px;top:171.76999999999998px" width="5.0" height="5.4" viewBox="0 0 5.0 5.4"><rect x="0.45" y="0.45" width="4.1" height="4.5" rx="0.3" fill="#fff" stroke="#e2e5e5" stroke-width="0.9"/></svg>
<div class="a " style="left:126.4px;top:170.76999999999998px;width:50.6px;height:7.6px;background:#eff1f1;border:1px solid #dde5e5"></div>
<div class="a " style="left:167px;top:170.76999999999998px;width:10px;height:7.6px;background:#d3dee0"></div>
<svg class="a" style="left:169.9px;top:172.92px" width="4.2" height="3.5" viewBox="0 0 4.2 3.5"><polygon points="0,0 4.2,0 2.1,3.5" fill="#fff"/></svg>
<div class="a t" style="left:6.2px;top:180.5px;transform:scaleX(0.88);transform-origin:0 0;color:#353535;width:67px;overflow:hidden">PwrAppt3</div>
<svg class="a" style="left:70.2px;top:180.7px" width="5.5" height="5.4" viewBox="0 0 5.5 5.4"><rect x="0.45" y="0.45" width="4.6" height="4.5" rx="0.3" fill="#edefef" stroke="#e3e6e6" stroke-width="0.9"/></svg>
<svg class="a" style="left:84.0px;top:180.7px" width="5.5" height="5.4" viewBox="0 0 5.5 5.4"><rect x="0.45" y="0.45" width="4.6" height="4.5" rx="0.3" fill="#edefef" stroke="#e3e6e6" stroke-width="0.9"/></svg>
<svg class="a" style="left:98.0px;top:180.7px" width="5.4" height="5.4" viewBox="0 0 5.4 5.4"><rect x="0.45" y="0.45" width="4.5" height="4.5" rx="0.3" fill="#fff" stroke="#e2e5e5" stroke-width="0.9"/></svg>
<svg class="a" style="left:112.5px;top:180.7px" width="5.0" height="5.4" viewBox="0 0 5.0 5.4"><rect x="0.45" y="0.45" width="4.1" height="4.5" rx="0.3" fill="#fff" stroke="#e2e5e5" stroke-width="0.9"/></svg>
<div class="a " style="left:126.4px;top:179.7px;width:50.6px;height:7.6px;background:#eff1f1;border:1px solid #dde5e5"></div>
<div class="a " style="left:167px;top:179.7px;width:10px;height:7.6px;background:#d3dee0"></div>
<svg class="a" style="left:169.9px;top:181.85px" width="4.2" height="3.5" viewBox="0 0 4.2 3.5"><polygon points="0,0 4.2,0 2.1,3.5" fill="#fff"/></svg>
<div class="a t" style="left:6.2px;top:189.43px;transform:scaleX(0.88);transform-origin:0 0;color:#353535;width:67px;overflow:hidden">PwrApptTot</div>
<svg class="a" style="left:70.2px;top:189.63px" width="5.5" height="5.4" viewBox="0 0 5.5 5.4"><rect x="0.45" y="0.45" width="4.6" height="4.5" rx="0.3" fill="#edefef" stroke="#e3e6e6" stroke-width="0.9"/></svg>
<svg class="a" style="left:84.0px;top:189.63px" width="5.5" height="5.4" viewBox="0 0 5.5 5.4"><rect x="0.45" y="0.45" width="4.6" height="4.5" rx="0.3" fill="#edefef" stroke="#e3e6e6" stroke-width="0.9"/></svg>
<svg class="a" style="left:98.0px;top:189.63px" width="5.4" height="5.4" viewBox="0 0 5.4 5.4"><rect x="0.45" y="0.45" width="4.5" height="4.5" rx="0.3" fill="#fff" stroke="#e2e5e5" stroke-width="0.9"/><path d="M1.35 2.8080000000000003 L2.43 3.888 L4.104 1.5120000000000002" fill="none" stroke="#3a3a3a" stroke-width="0.9"/></svg>
<svg class="a" style="left:112.5px;top:189.63px" width="5.0" height="5.4" viewBox="0 0 5.0 5.4"><rect x="0.45" y="0.45" width="4.1" height="4.5" rx="0.3" fill="#fff" stroke="#e2e5e5" stroke-width="0.9"/></svg>
<div class="a " style="left:126.4px;top:188.43px;width:50.6px;height:8.2px;background:#fff;border:1px solid #c4c8ca"></div>
<div class="a " style="left:167px;top:188.43px;width:10px;height:8.2px;background:#8b9093"></div>
<svg class="a" style="left:169.9px;top:190.88px" width="4.2" height="3.5" viewBox="0 0 4.2 3.5"><polygon points="0,0 4.2,0 2.1,3.5" fill="#fff"/></svg>
<div class="a t" style="left:6.2px;top:198.36px;transform:scaleX(0.88);transform-origin:0 0;color:#353535;width:67px;overflow:hidden">PwrActv1</div>
<svg class="a" style="left:70.2px;top:198.56px" width="5.5" height="5.4" viewBox="0 0 5.5 5.4"><rect x="0.45" y="0.45" width="4.6" height="4.5" rx="0.3" fill="#edefef" stroke="#e3e6e6" stroke-width="0.9"/></svg>
<svg class="a" style="left:84.0px;top:198.56px" width="5.5" height="5.4" viewBox="0 0 5.5 5.4"><rect x="0.45" y="0.45" width="4.6" height="4.5" rx="0.3" fill="#edefef" stroke="#e3e6e6" stroke-width="0.9"/></svg>
<svg class="a" style="left:98.0px;top:198.56px" width="5.4" height="5.4" viewBox="0 0 5.4 5.4"><rect x="0.45" y="0.45" width="4.5" height="4.5" rx="0.3" fill="#fff" stroke="#e2e5e5" stroke-width="0.9"/></svg>
<svg class="a" style="left:112.5px;top:198.56px" width="5.0" height="5.4" viewBox="0 0 5.0 5.4"><rect x="0.45" y="0.45" width="4.1" height="4.5" rx="0.3" fill="#fff" stroke="#e2e5e5" stroke-width="0.9"/></svg>
<div class="a " style="left:126.4px;top:197.56px;width:50.6px;height:7.6px;background:#eff1f1;border:1px solid #dde5e5"></div>
<div class="a " style="left:167px;top:197.56px;width:10px;height:7.6px;background:#d3dee0"></div>
<svg class="a" style="left:169.9px;top:199.71px" width="4.2" height="3.5" viewBox="0 0 4.2 3.5"><polygon points="0,0 4.2,0 2.1,3.5" fill="#fff"/></svg>
<div class="a t" style="left:6.2px;top:207.29px;transform:scaleX(0.88);transform-origin:0 0;color:#353535;width:67px;overflow:hidden">PwrActv2</div>
<svg class="a" style="left:70.2px;top:207.48999999999995px" width="5.5" height="5.4" viewBox="0 0 5.5 5.4"><rect x="0.45" y="0.45" width="4.6" height="4.5" rx="0.3" fill="#edefef" stroke="#e3e6e6" stroke-width="0.9"/></svg>
<svg class="a" style="left:84.0px;top:207.48999999999995px" width="5.5" height="5.4" viewBox="0 0 5.5 5.4"><rect x="0.45" y="0.45" width="4.6" height="4.5" rx="0.3" fill="#edefef" stroke="#e3e6e6" stroke-width="0.9"/></svg>
<svg class="a" style="left:98.0px;top:207.48999999999995px" width="5.4" height="5.4" viewBox="0 0 5.4 5.4"><rect x="0.45" y="0.45" width="4.5" height="4.5" rx="0.3" fill="#fff" stroke="#e2e5e5" stroke-width="0.9"/></svg>
<svg class="a" style="left:112.5px;top:207.48999999999995px" width="5.0" height="5.4" viewBox="0 0 5.0 5.4"><rect x="0.45" y="0.45" width="4.1" height="4.5" rx="0.3" fill="#fff" stroke="#e2e5e5" stroke-width="0.9"/></svg>
<div class="a " style="left:126.4px;top:206.48999999999995px;width:50.6px;height:7.6px;background:#eff1f1;border:1px solid #dde5e5"></div>
<div class="a " style="left:167px;top:206.48999999999995px;width:10px;height:7.6px;background:#d3dee0"></div>
<svg class="a" style="left:169.9px;top:208.64px" width="4.2" height="3.5" viewBox="0 0 4.2 3.5"><polygon points="0,0 4.2,0 2.1,3.5" fill="#fff"/></svg>
<div class="a t" style="left:6.2px;top:216.22px;transform:scaleX(0.88);transform-origin:0 0;color:#353535;width:67px;overflow:hidden">PwrActv3</div>
<svg class="a" style="left:70.2px;top:216.42000000000002px" width="5.5" height="5.4" viewBox="0 0 5.5 5.4"><rect x="0.45" y="0.45" width="4.6" height="4.5" rx="0.3" fill="#edefef" stroke="#e3e6e6" stroke-width="0.9"/></svg>
<svg class="a" style="left:84.0px;top:216.42000000000002px" width="5.5" height="5.4" viewBox="0 0 5.5 5.4"><rect x="0.45" y="0.45" width="4.6" height="4.5" rx="0.3" fill="#edefef" stroke="#e3e6e6" stroke-width="0.9"/></svg>
<svg class="a" style="left:98.0px;top:216.42000000000002px" width="5.4" height="5.4" viewBox="0 0 5.4 5.4"><rect x="0.45" y="0.45" width="4.5" height="4.5" rx="0.3" fill="#fff" stroke="#e2e5e5" stroke-width="0.9"/></svg>
<svg class="a" style="left:112.5px;top:216.42000000000002px" width="5.0" height="5.4" viewBox="0 0 5.0 5.4"><rect x="0.45" y="0.45" width="4.1" height="4.5" rx="0.3" fill="#fff" stroke="#e2e5e5" stroke-width="0.9"/></svg>
<div class="a " style="left:126.4px;top:215.42000000000002px;width:50.6px;height:7.6px;background:#eff1f1;border:1px solid #dde5e5"></div>
<div class="a " style="left:167px;top:215.42000000000002px;width:10px;height:7.6px;background:#d3dee0"></div>
<svg class="a" style="left:169.9px;top:217.57px" width="4.2" height="3.5" viewBox="0 0 4.2 3.5"><polygon points="0,0 4.2,0 2.1,3.5" fill="#fff"/></svg>
<div class="a t" style="left:6.2px;top:225.15px;transform:scaleX(0.88);transform-origin:0 0;color:#353535;width:67px;overflow:hidden">PwrActvTot</div>
<svg class="a" style="left:70.2px;top:225.34999999999997px" width="5.5" height="5.4" viewBox="0 0 5.5 5.4"><rect x="0.45" y="0.45" width="4.6" height="4.5" rx="0.3" fill="#edefef" stroke="#e3e6e6" stroke-width="0.9"/></svg>
<svg class="a" style="left:84.0px;top:225.34999999999997px" width="5.5" height="5.4" viewBox="0 0 5.5 5.4"><rect x="0.45" y="0.45" width="4.6" height="4.5" rx="0.3" fill="#edefef" stroke="#e3e6e6" stroke-width="0.9"/></svg>
<svg class="a" style="left:98.0px;top:225.34999999999997px" width="5.4" height="5.4" viewBox="0 0 5.4 5.4"><rect x="0.45" y="0.45" width="4.5" height="4.5" rx="0.3" fill="#fff" stroke="#e2e5e5" stroke-width="0.9"/><path d="M1.35 2.8080000000000003 L2.43 3.888 L4.104 1.5120000000000002" fill="none" stroke="#3a3a3a" stroke-width="0.9"/></svg>
<svg class="a" style="left:112.5px;top:225.34999999999997px" width="5.0" height="5.4" viewBox="0 0 5.0 5.4"><rect x="0.45" y="0.45" width="4.1" height="4.5" rx="0.3" fill="#fff" stroke="#e2e5e5" stroke-width="0.9"/></svg>
<div class="a " style="left:126.4px;top:224.14999999999998px;width:50.6px;height:8.2px;background:#fff;border:1px solid #c4c8ca"></div>
<div class="a " style="left:167px;top:224.14999999999998px;width:10px;height:8.2px;background:#8b9093"></div>
<svg class="a" style="left:169.9px;top:226.6px" width="4.2" height="3.5" viewBox="0 0 4.2 3.5"><polygon points="0,0 4.2,0 2.1,3.5" fill="#fff"/></svg>
<div class="a t" style="left:6.2px;top:234.08px;transform:scaleX(0.88);transform-origin:0 0;color:#353535;width:67px;overflow:hidden">PwrRactv1</div>
<svg class="a" style="left:70.2px;top:234.28000000000003px" width="5.5" height="5.4" viewBox="0 0 5.5 5.4"><rect x="0.45" y="0.45" width="4.6" height="4.5" rx="0.3" fill="#edefef" stroke="#e3e6e6" stroke-width="0.9"/></svg>
<svg class="a" style="left:84.0px;top:234.28000000000003px" width="5.5" height="5.4" viewBox="0 0 5.5 5.4"><rect x="0.45" y="0.45" width="4.6" height="4.5" rx="0.3" fill="#edefef" stroke="#e3e6e6" stroke-width="0.9"/></svg>
<svg class="a" style="left:98.0px;top:234.28000000000003px" width="5.4" height="5.4" viewBox="0 0 5.4 5.4"><rect x="0.45" y="0.45" width="4.5" height="4.5" rx="0.3" fill="#fff" stroke="#e2e5e5" stroke-width="0.9"/></svg>
<svg class="a" style="left:112.5px;top:234.28000000000003px" width="5.0" height="5.4" viewBox="0 0 5.0 5.4"><rect x="0.45" y="0.45" width="4.1" height="4.5" rx="0.3" fill="#fff" stroke="#e2e5e5" stroke-width="0.9"/></svg>
<div class="a " style="left:126.4px;top:233.28000000000003px;width:50.6px;height:7.6px;background:#eff1f1;border:1px solid #dde5e5"></div>
<div class="a " style="left:167px;top:233.28000000000003px;width:10px;height:7.6px;background:#d3dee0"></div>
<svg class="a" style="left:169.9px;top:235.43px" width="4.2" height="3.5" viewBox="0 0 4.2 3.5"><polygon points="0,0 4.2,0 2.1,3.5" fill="#fff"/></svg>
<div class="a t" style="left:6.2px;top:243.01px;transform:scaleX(0.88);transform-origin:0 0;color:#353535;width:67px;overflow:hidden">PwrRactv2</div>
<svg class="a" style="left:70.2px;top:243.20999999999998px" width="5.5" height="5.4" viewBox="0 0 5.5 5.4"><rect x="0.45" y="0.45" width="4.6" height="4.5" rx="0.3" fill="#edefef" stroke="#e3e6e6" stroke-width="0.9"/></svg>
<svg class="a" style="left:84.0px;top:243.20999999999998px" width="5.5" height="5.4" viewBox="0 0 5.5 5.4"><rect x="0.45" y="0.45" width="4.6" height="4.5" rx="0.3" fill="#edefef" stroke="#e3e6e6" stroke-width="0.9"/></svg>
<svg class="a" style="left:98.0px;top:243.20999999999998px" width="5.4" height="5.4" viewBox="0 0 5.4 5.4"><rect x="0.45" y="0.45" width="4.5" height="4.5" rx="0.3" fill="#fff" stroke="#e2e5e5" stroke-width="0.9"/></svg>
<svg class="a" style="left:112.5px;top:243.20999999999998px" width="5.0" height="5.4" viewBox="0 0 5.0 5.4"><rect x="0.45" y="0.45" width="4.1" height="4.5" rx="0.3" fill="#fff" stroke="#e2e5e5" stroke-width="0.9"/></svg>
<div class="a " style="left:126.4px;top:242.20999999999998px;width:50.6px;height:7.6px;background:#eff1f1;border:1px solid #dde5e5"></div>
<div class="a " style="left:167px;top:242.20999999999998px;width:10px;height:7.6px;background:#d3dee0"></div>
<svg class="a" style="left:169.9px;top:244.36px" width="4.2" height="3.5" viewBox="0 0 4.2 3.5"><polygon points="0,0 4.2,0 2.1,3.5" fill="#fff"/></svg>
<div class="a t" style="left:6.2px;top:251.94px;transform:scaleX(0.88);transform-origin:0 0;color:#353535;width:67px;overflow:hidden">PwrRactv3</div>
<svg class="a" style="left:70.2px;top:252.14px" width="5.5" height="5.4" viewBox="0 0 5.5 5.4"><rect x="0.45" y="0.45" width="4.6" height="4.5" rx="0.3" fill="#edefef" stroke="#e3e6e6" stroke-width="0.9"/></svg>
<svg class="a" style="left:84.0px;top:252.14px" width="5.5" height="5.4" viewBox="0 0 5.5 5.4"><rect x="0.45" y="0.45" width="4.6" height="4.5" rx="0.3" fill="#edefef" stroke="#e3e6e6" stroke-width="0.9"/></svg>
<svg class="a" style="left:98.0px;top:252.14px" width="5.4" height="5.4" viewBox="0 0 5.4 5.4"><rect x="0.45" y="0.45" width="4.5" height="4.5" rx="0.3" fill="#fff" stroke="#e2e5e5" stroke-width="0.9"/></svg>
<svg class="a" style="left:112.5px;top:252.14px" width="5.0" height="5.4" viewBox="0 0 5.0 5.4"><rect x="0.45" y="0.45" width="4.1" height="4.5" rx="0.3" fill="#fff" stroke="#e2e5e5" stroke-width="0.9"/></svg>
<div class="a " style="left:126.4px;top:251.14px;width:50.6px;height:7.6px;background:#eff1f1;border:1px solid #dde5e5"></div>
<div class="a " style="left:167px;top:251.14px;width:10px;height:7.6px;background:#d3dee0"></div>
<svg class="a" style="left:169.9px;top:253.29px" width="4.2" height="3.5" viewBox="0 0 4.2 3.5"><polygon points="0,0 4.2,0 2.1,3.5" fill="#fff"/></svg>
<div class="a t" style="left:6.2px;top:260.87px;transform:scaleX(0.88);transform-origin:0 0;color:#353535;width:67px;overflow:hidden">PwrRactvTot</div>
<svg class="a" style="left:70.2px;top:261.07px" width="5.5" height="5.4" viewBox="0 0 5.5 5.4"><rect x="0.45" y="0.45" width="4.6" height="4.5" rx="0.3" fill="#edefef" stroke="#e3e6e6" stroke-width="0.9"/></svg>
<svg class="a" style="left:84.0px;top:261.07px" width="5.5" height="5.4" viewBox="0 0 5.5 5.4"><rect x="0.45" y="0.45" width="4.6" height="4.5" rx="0.3" fill="#edefef" stroke="#e3e6e6" stroke-width="0.9"/></svg>
<svg class="a" style="left:98.0px;top:261.07px" width="5.4" height="5.4" viewBox="0 0 5.4 5.4"><rect x="0.45" y="0.45" width="4.5" height="4.5" rx="0.3" fill="#fff" stroke="#e2e5e5" stroke-width="0.9"/><path d="M1.35 2.8080000000000003 L2.43 3.888 L4.104 1.5120000000000002" fill="none" stroke="#3a3a3a" stroke-width="0.9"/></svg>
<svg class="a" style="left:112.5px;top:261.07px" width="5.0" height="5.4" viewBox="0 0 5.0 5.4"><rect x="0.45" y="0.45" width="4.1" height="4.5" rx="0.3" fill="#fff" stroke="#e2e5e5" stroke-width="0.9"/></svg>
<div class="a " style="left:126.4px;top:259.87px;width:50.6px;height:8.2px;background:#fff;border:1px solid #c4c8ca"></div>
<div class="a " style="left:167px;top:259.87px;width:10px;height:8.2px;background:#8b9093"></div>
<svg class="a" style="left:169.9px;top:262.32px" width="4.2" height="3.5" viewBox="0 0 4.2 3.5"><polygon points="0,0 4.2,0 2.1,3.5" fill="#fff"/></svg>
<div class="a t" style="left:6.2px;top:269.8px;transform:scaleX(0.88);transform-origin:0 0;color:#353535;width:67px;overflow:hidden">EnActvCrsm1</div>
<svg class="a" style="left:70.2px;top:269.99999999999994px" width="5.5" height="5.4" viewBox="0 0 5.5 5.4"><rect x="0.45" y="0.45" width="4.6" height="4.5" rx="0.3" fill="#edefef" stroke="#e3e6e6" stroke-width="0.9"/></svg>
<svg class="a" style="left:84.0px;top:269.99999999999994px" width="5.5" height="5.4" viewBox="0 0 5.5 5.4"><rect x="0.45" y="0.45" width="4.6" height="4.5" rx="0.3" fill="#edefef" stroke="#e3e6e6" stroke-width="0.9"/></svg>
<svg class="a" style="left:98.0px;top:269.99999999999994px" width="5.4" height="5.4" viewBox="0 0 5.4 5.4"><rect x="0.45" y="0.45" width="4.5" height="4.5" rx="0.3" fill="#fff" stroke="#e2e5e5" stroke-width="0.9"/></svg>
<svg class="a" style="left:112.5px;top:269.99999999999994px" width="5.0" height="5.4" viewBox="0 0 5.0 5.4"><rect x="0.45" y="0.45" width="4.1" height="4.5" rx="0.3" fill="#fff" stroke="#e2e5e5" stroke-width="0.9"/></svg>
<div class="a " style="left:126.4px;top:268.99999999999994px;width:50.6px;height:7.6px;background:#eff1f1;border:1px solid #dde5e5"></div>
<div class="a " style="left:167px;top:268.99999999999994px;width:10px;height:7.6px;background:#d3dee0"></div>
<svg class="a" style="left:169.9px;top:271.15px" width="4.2" height="3.5" viewBox="0 0 4.2 3.5"><polygon points="0,0 4.2,0 2.1,3.5" fill="#fff"/></svg>
</div>
<div class="a " style="left:222.9px;top:139.5px;width:3.2px;height:265.3px;background:#8e9497"></div>
<svg class="a" style="left:223.2px;top:135.25px" width="2.8" height="1.9" viewBox="0 0 2.8 1.9"><polygon points="0,1.9 1.4,0 2.8,1.9" fill="#666"/></svg>
<div class="a " style="left:232px;top:119px;width:1.6px;height:286px;background:#c2c4c5"></div>
<div class="a " style="left:233.6px;top:119px;width:2.0px;height:286px;background:#fbfbfb"></div>
<div class="a " style="left:237px;top:123px;width:408px;height:126px;background:#f1f1f1;box-shadow:inset 1px 0 0 #a9adb0,inset -1px 0 0 #a9adb0,inset 0 -1px 0 #a9adb0"></div>
<div class="a " style="left:237px;top:123px;width:408px;height:7.6px;background:#707578"></div>
<svg class="a" style="left:240.0px;top:125.2px" width="3.2" height="3" viewBox="0 0 3.2 3"><polygon points="0,0 3.2,0 1.6,3" fill="#fff"/></svg>
<div class="a t" style="left:246.5px;top:123.4px;transform:scaleX(0.92);transform-origin:0 0;color:#dfe5ee">Details</div>
<div class="a " style="left:239.5px;top:135px;width:403.5px;height:40.3px;border:1px solid #e3e3e3;box-shadow:0.5px 0.5px 0 #f9f9f9"></div>
<div class="a t" style="left:242.2px;top:133.1px;transform:scaleX(0.92);transform-origin:0 0;background:#f1f1f1;padding:0 0.5px;color:#3e3e3e;font-size:4.7px">General</div>
<div class="a t" style="left:241.6px;top:141.3px;transform:scaleX(0.92);transform-origin:0 0;">Type:</div>
<div class="a " style="left:296px;top:140.3px;width:141.6px;height:7.9px;background:#eff1f1;border:1px solid #dde5e5"></div>
<div class="a " style="left:427.6px;top:140.3px;width:10.0px;height:7.9px;background:#d3dee0"></div>
<svg class="a" style="left:430.5px;top:142.6px" width="4.2" height="3.5" viewBox="0 0 4.2 3.5"><polygon points="0,0 4.2,0 2.1,3.5" fill="#fff"/></svg>
<div class="a t" style="left:298.5px;top:141.25px;transform:scaleX(0.92);transform-origin:0 0;font-size:5px;">GmsReal</div>
<div class="a t" style="left:241.6px;top:152.6px;transform:scaleX(0.92);transform-origin:0 0;">Description:</div>
<div class="a " style="left:296px;top:151.3px;width:343px;height:9.1px;background:#eff1f1;border:1px solid #dde5e5"></div>
<div class="a t" style="left:298.5px;top:152.85px;transform:scaleX(0.92);transform-origin:0 0;font-size:5px;">Voltage Phase Neutral Conductor L1 N</div>
<svg class="a" style="left:631.1px;top:152.5px" width="6.4" height="5" viewBox="0 0 7 5.5" preserveAspectRatio="none"><rect width="7" height="5.5" rx="0.9" fill="#e3303f"/><rect x="3.1" y="0" width="3.9" height="2.6" fill="#f2a9b2"/><rect x="0" y="0" width="3.3" height="2.6" fill="#5563b8"/><rect x="0" y="2.6" width="7" height="0.5" fill="#c8283a"/></svg>
<div class="a t" style="left:241.6px;top:164.8px;transform:scaleX(0.92);transform-origin:0 0;">Address:</div>
<div class="a " style="left:296px;top:163.7px;width:343px;height:8.0px;background:#ebebeb;border:1px solid #c2c2c2"></div>
<div class="a t" style="left:298.5px;top:164.7px;transform:scaleX(0.92);transform-origin:0 0;font-size:5px;">M.1.3.4058</div>
<div class="a " style="left:239.5px;top:182px;width:403.5px;height:64.3px;border:1px solid #e3e3e3;box-shadow:0.5px 0.5px 0 #f9f9f9"></div>
<div class="a t" style="left:242.2px;top:180.1px;transform:scaleX(0.92);transform-origin:0 0;background:#f1f1f1;padding:0 0.5px;color:#3e3e3e;font-size:5px">Value Attributes</div>
<div class="a t" style="left:241.6px;top:187.5px;transform:scaleX(0.92);transform-origin:0 0;">Valid</div>
<svg class="a" style="left:296px;top:188.4px" width="6" height="5.4" viewBox="0 0 6 5.4"><rect x="0.45" y="0.45" width="5.1" height="4.5" rx="0.3" fill="#fff" stroke="#a9cdf7" stroke-width="0.9"/><path d="M1.5 2.8080000000000003 L2.7 3.888 L4.5600000000000005 1.5120000000000002" fill="none" stroke="#3a82e6" stroke-width="1.1"/></svg>
<div class="a t" style="left:241.6px;top:199.2px;transform:scaleX(0.92);transform-origin:0 0;">Min:</div>
<div class="a " style="left:296px;top:199.2px;width:52.7px;height:7.0px;background:#eff1f1;border:1px solid #dde5e5"></div>
<div class="a t" style="left:298.5px;top:199.7px;transform:scaleX(0.92);transform-origin:0 0;font-size:5px;">-1.797693e+308</div>
<div class="a t" style="left:449px;top:199.4px;transform:scaleX(0.92);transform-origin:0 0;">Max:</div>
<div class="a " style="left:493.8px;top:199.5px;width:53.9px;height:7.0px;background:#eff1f1;border:1px solid #dde5e5"></div>
<div class="a t" style="left:496.3px;top:200.0px;transform:scaleX(0.92);transform-origin:0 0;font-size:5px;">1.797693e+308</div>
<div class="a t" style="left:241.6px;top:211.4px;transform:scaleX(0.92);transform-origin:0 0;">Resolution:</div>
<div class="a " style="left:296px;top:210.8px;width:52.7px;height:7.4px;background:#eff1f1;border:1px solid #dde5e5"></div>
<div class="a t" style="left:298.5px;top:211.5px;transform:scaleX(0.92);transform-origin:0 0;font-size:5px;">1</div>
<div class="a t" style="left:241.6px;top:223.5px;transform:scaleX(0.92);transform-origin:0 0;">Unit text group:</div>
<div class="a " style="left:296px;top:222.4px;width:343px;height:7.8px;background:#eff1f1;border:1px solid #dde5e5"></div>
<div class="a " style="left:629px;top:222.4px;width:10px;height:7.8px;background:#d3dee0"></div>
<svg class="a" style="left:631.9px;top:224.65px" width="4.2" height="3.5" viewBox="0 0 4.2 3.5"><polygon points="0,0 4.2,0 2.1,3.5" fill="#fff"/></svg>
<div class="a t" style="left:298.5px;top:223.3px;transform:scaleX(0.92);transform-origin:0 0;font-size:5px;">TxG_EngineeringUnits</div>
<div class="a t" style="left:241.6px;top:235.2px;transform:scaleX(0.92);transform-origin:0 0;">Unit:</div>
<div class="a " style="left:296px;top:234.3px;width:343px;height:7.9px;background:#eff1f1;border:1px solid #dde5e5"></div>
<div class="a " style="left:629px;top:234.3px;width:10px;height:7.9px;background:#d3dee0"></div>
<svg class="a" style="left:631.9px;top:236.6px" width="4.2" height="3.5" viewBox="0 0 4.2 3.5"><polygon points="0,0 4.2,0 2.1,3.5" fill="#fff"/></svg>
<div class="a t" style="left:298.5px;top:235.25px;transform:scaleX(0.92);transform-origin:0 0;font-size:5px;">V</div>
<div class="a " style="left:237px;top:252.2px;width:408px;height:45.1px;background:#f1f1f1;box-shadow:inset 1px 0 0 #a9adb0,inset -1px 0 0 #a9adb0,inset 0 -1px 0 #a9adb0"></div>
<div class="a " style="left:237px;top:252.2px;width:408px;height:7.8px;background:#707578"></div>
<svg class="a" style="left:240.0px;top:254.5px" width="3.2" height="3" viewBox="0 0 3.2 3"><polygon points="0,0 3.2,0 1.6,3" fill="#fff"/></svg>
<div class="a t" style="left:246.5px;top:252.7px;transform:scaleX(0.92);transform-origin:0 0;color:#dfe5ee">Alarm Configuration</div>
<div class="a t" style="left:242.7px;top:264.3px;transform:scaleX(0.92);transform-origin:0 0;">Valid:</div>
<svg class="a" style="left:272px;top:264.7px" width="5.7" height="5.8" viewBox="0 0 5.7 5.8"><rect x="0.45" y="0.45" width="4.8" height="4.9" rx="0.3" fill="#fff" stroke="#c4c8ca" stroke-width="0.9"/></svg>
<div class="a " style="left:239.5px;top:278px;width:403.5px;height:15px;border-top:1px solid #e2e2e2;border-right:1px solid #e6e6e6"></div>
<div class="a t" style="left:241.3px;top:275.3px;transform:scaleX(0.9);transform-origin:0 0;background:#f1f1f1;padding:0 0.5px;color:#2e2e2e">Alarm Configuration</div>
<div class="a" style="left:245.0px;top:285.2px;width:5.2px;height:5.2px;border-radius:50%;box-sizing:border-box;border:0.8px solid #d2d8d8;background:#f2f4f4"></div>
<div class="a t" style="left:252.79999999999998px;top:284.8px;transform:scaleX(0.92);transform-origin:0 0;color:#b8bcbf">None</div>
<div class="a" style="left:271.59999999999997px;top:285.2px;width:5.2px;height:5.2px;border-radius:50%;box-sizing:border-box;border:0.8px solid #d2d8d8;background:#f2f4f4"></div>
<div class="a t" style="left:279.4px;top:284.8px;transform:scaleX(0.92);transform-origin:0 0;color:#b8bcbf">Field system</div>
<div class="a" style="left:312.4px;top:285.2px;width:5.2px;height:5.2px;border-radius:50%;box-sizing:border-box;border:0.8px solid #d2d8d8;background:#f2f4f4"></div>
<div class="a t" style="left:320.2px;top:284.8px;transform:scaleX(0.92);transform-origin:0 0;color:#b8bcbf">Management Station</div>
<div class="a" style="left:246.6px;top:286.8px;width:2px;height:2px;border-radius:50%;background:#9aa0a4"></div>
<div class="a " style="left:238px;top:302px;width:407px;height:44.3px;background:#f1f1f1;box-shadow:inset 1px 0 0 #a9adb0,inset -1px 0 0 #a9adb0,inset 0 -1px 0 #a9adb0"></div>
<div class="a " style="left:238px;top:302px;width:407px;height:7.5px;background:#707578"></div>
<svg class="a" style="left:241.0px;top:304.15px" width="3.2" height="3" viewBox="0 0 3.2 3"><polygon points="0,0 3.2,0 1.6,3" fill="#fff"/></svg>
<div class="a t" style="left:247.5px;top:302.35px;transform:scaleX(0.92);transform-origin:0 0;color:#dfe5ee">Value Conversion</div>
<div class="a t" style="left:242px;top:313.6px;transform:scaleX(0.92);transform-origin:0 0;">Valid</div>
<svg class="a" style="left:297px;top:313.6px" width="6" height="6" viewBox="0 0 6 6"><path d="M1.3 3.2 L2.5 4.6 L4.8 1.2" fill="none" stroke="#444" stroke-width="0.7"/></svg>
<div class="a t" style="left:242px;top:324.5px;transform:scaleX(0.92);transform-origin:0 0;">Min raw value:</div>
<div class="a " style="left:296.5px;top:323.8px;width:53.0px;height:7.6px;background:#fff;border:1px solid #c4c8ca"></div>
<div class="a t" style="left:299.0px;top:324.6px;transform:scaleX(0.92);transform-origin:0 0;font-size:5px;">0.0</div>
<div class="a t" style="left:448.5px;top:324.4px;transform:scaleX(0.92);transform-origin:0 0;">Max raw value:</div>
<div class="a " style="left:494.2px;top:323.2px;width:53.1px;height:8.3px;background:#fff;border:1px solid #c4c8ca"></div>
<div class="a t" style="left:496.7px;top:324.35px;transform:scaleX(0.92);transform-origin:0 0;font-size:5px;">10.0</div>
<div class="a t" style="left:242px;top:336.1px;transform:scaleX(0.92);transform-origin:0 0;">Min eng. value:</div>
<div class="a " style="left:296.5px;top:335.4px;width:53.0px;height:7.4px;background:#fff;border:1px solid #c4c8ca"></div>
<div class="a t" style="left:299.0px;top:336.1px;transform:scaleX(0.92);transform-origin:0 0;font-size:5px;">0.0</div>
<div class="a t" style="left:448.5px;top:336.3px;transform:scaleX(0.92);transform-origin:0 0;">Max eng. value:</div>
<div class="a " style="left:494.2px;top:335.5px;width:53.1px;height:7.7px;background:#fff;border:1px solid #c4c8ca"></div>
<div class="a t" style="left:496.7px;top:336.35px;transform:scaleX(0.92);transform-origin:0 0;font-size:5px;">1.0</div>
<div class="a " style="left:237.2px;top:349.8px;width:407.8px;height:42.9px;background:#f1f1f1;box-shadow:inset 1px 0 0 #a9adb0,inset -1px 0 0 #a9adb0,inset 0 -1px 0 #a9adb0"></div>
<div class="a " style="left:237.2px;top:349.8px;width:407.8px;height:7.9px;background:#707578"></div>
<svg class="a" style="left:240.2px;top:352.15px" width="3.2" height="3" viewBox="0 0 3.2 3"><polygon points="0,0 3.2,0 1.6,3" fill="#fff"/></svg>
<div class="a t" style="left:246.7px;top:350.35px;transform:scaleX(0.92);transform-origin:0 0;color:#dfe5ee">Smoothing</div>
<div class="a t" style="left:242px;top:361.2px;transform:scaleX(0.92);transform-origin:0 0;">Valid</div>
<svg class="a" style="left:297px;top:362.3px" width="5.3" height="5.1" viewBox="0 0 5.3 5.1"><rect x="0.45" y="0.45" width="4.4" height="4.2" rx="0.3" fill="#fff" stroke="#c4c8ca" stroke-width="0.9"/></svg>
<div class="a t" style="left:242px;top:372.3px;transform:scaleX(0.92);transform-origin:0 0;">Smoothing type:</div>
<div class="a " style="left:296.3px;top:371.5px;width:342.7px;height:7.9px;background:#eff1f1;border:1px solid #dde5e5"></div>
<div class="a " style="left:629px;top:371.5px;width:10px;height:7.9px;background:#d3dee0"></div>
<svg class="a" style="left:631.9px;top:373.8px" width="4.2" height="3.5" viewBox="0 0 4.2 3.5"><polygon points="0,0 4.2,0 2.1,3.5" fill="#fff"/></svg>
<div class="a t" style="left:298.8px;top:372.45px;transform:scaleX(0.92);transform-origin:0 0;font-size:5px;">Value- AND time-dependent smoothing</div>
<div class="a t" style="left:242px;top:383.5px;transform:scaleX(0.92);transform-origin:0 0;">Time interval:</div>
<div class="a " style="left:296.3px;top:382.6px;width:56.5px;height:7.7px;background:#fff;border:1px solid #d4d6d8"></div>
<div class="a t" style="left:318.8px;top:383.2px;font-size:5.1px;letter-spacing:0.25px;color:#444">0&#8202;:&#8202;00&#8202;:&#8202;10&#8202;.&#8202;000</div>
<div class="a t" style="left:448.5px;top:383.7px;transform:scaleX(0.92);transform-origin:0 0;">Deadband:</div>
<div class="a " style="left:493.9px;top:383.4px;width:53.4px;height:7.3px;background:#eeeeee;border:1px solid #e6e6e6"></div>
<div class="a t" style="left:496.4px;top:384.05px;transform:scaleX(0.92);transform-origin:0 0;font-size:5px;">5.0</div>
<div class="a " style="left:550.5px;top:383.4px;width:26.7px;height:7.3px;background:#eff1f1;border:1px solid #dde5e5"></div>
<div class="a " style="left:567.2px;top:383.4px;width:10.0px;height:7.3px;background:#d3dee0"></div>
<svg class="a" style="left:570.1px;top:385.4px" width="4.2" height="3.5" viewBox="0 0 4.2 3.5"><polygon points="0,0 4.2,0 2.1,3.5" fill="#fff"/></svg>
<div class="a t" style="left:553.0px;top:384.05px;transform:scaleX(0.92);transform-origin:0 0;font-size:5px;">[%]</div>
<div class="a " style="left:650px;top:30px;width:3px;height:264.5px;background:#989ea1"></div>
<div class="a " style="left:650px;top:294.5px;width:3px;height:106.0px;background:#d9e3e6"></div>
<svg class="a" style="left:650.2px;top:25.5px" width="2.6" height="1.8" viewBox="0 0 2.6 1.8"><polygon points="0,1.8 1.3,0 2.6,1.8" fill="#555"/></svg>
<svg class="a" style="left:650.3px;top:402.2px" width="2.4" height="1.6" viewBox="0 0 2.4 1.6"><polygon points="0,0 2.4,0 1.2,1.6" fill="#666"/></svg>
<div class="a " style="left:322px;top:408.8px;width:17px;height:3.2px;background:#f0f0f0"></div>
<svg class="a" style="left:22.3px;top:137px" width="204.79999999999998" height="17.599999999999994" viewBox="-3 -3 204.79999999999998 17.599999999999994"><defs><filter id="f25" x="-10%" y="-50%" width="120%" height="200%"><feGaussianBlur stdDeviation="0.8"/></filter></defs><rect x="-0.050000000000000044" y="-0.15000000000000002" width="197.29999999999998" height="10.099999999999994" rx="5.5" fill="none" stroke="rgba(0,0,0,0.45)" stroke-width="1.8" filter="url(#f25)"/><rect x="1.85" y="1.85" width="195.1" height="7.899999999999994" rx="4.5" fill="none" stroke="rgba(0,0,0,0.3)" stroke-width="1.5" filter="url(#f25)"/><rect x="0.75" y="0.75" width="197.29999999999998" height="10.099999999999994" rx="5.5" fill="none" stroke="#c6462b" stroke-width="1.5"/></svg>
<svg class="a" style="left:230.8px;top:295.8px" width="417.3" height="55.80000000000001" viewBox="-3 -3 417.3 55.80000000000001"><defs><filter id="f233" x="-10%" y="-50%" width="120%" height="200%"><feGaussianBlur stdDeviation="0.8"/></filter></defs><rect x="0.0" y="-0.09999999999999998" width="409.7" height="48.20000000000001" rx="10" fill="none" stroke="rgba(0,0,0,0.45)" stroke-width="1.8" filter="url(#f233)"/><rect x="1.9000000000000001" y="1.9000000000000001" width="407.5" height="46.00000000000001" rx="9" fill="none" stroke="rgba(0,0,0,0.3)" stroke-width="1.5" filter="url(#f233)"/><rect x="0.8" y="0.8" width="409.7" height="48.20000000000001" rx="10" fill="none" stroke="#c6462b" stroke-width="1.6"/></svg>
</body></html>
